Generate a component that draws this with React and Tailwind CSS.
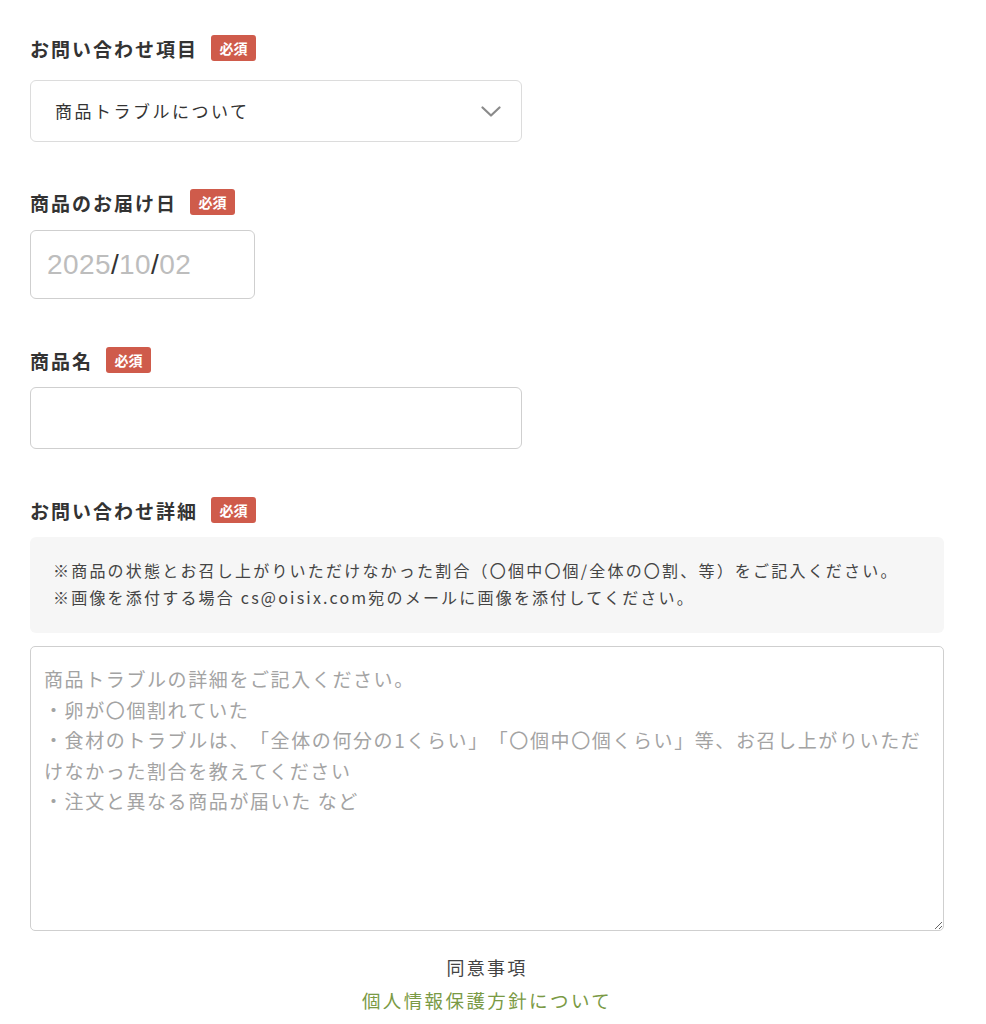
import React from "react";

const jp = { fontFamily: '"Noto Sans CJK JP", "Noto Sans", sans-serif' };

const Required = () => (
  <span className="inline-flex h-[26px] w-[45px] items-center justify-center rounded-[3px] bg-[#cf5b4b] text-[14px] font-bold leading-none text-white">
    必須
  </span>
);

const Label = ({ children, className = "" }) => (
  <div className={`flex items-center gap-[13px] ${className}`}>
    <span className="text-[19px] font-bold leading-none tracking-[2px] text-[#333]">{children}</span>
    <Required />
  </div>
);

const placeholder =
  "商品トラブルの詳細をご記入ください。\n・卵が〇個割れていた\n・食材のトラブルは、「全体の何分の1くらい」「〇個中〇個くらい」等、お召し上がりいただけなかった割合を教えてください\n・注文と異なる商品が届いた など";

export default function App() {
  return (
    <div className="min-h-screen bg-white [text-spacing-trim:space-all]" style={jp}>
      <div className="ml-[30px] w-[914px] pt-[35px]">
        {/* お問い合わせ項目 */}
        <Label>お問い合わせ項目</Label>
        <div className="mt-[19px] flex h-[62px] w-[492px] items-center justify-between rounded-[6px] border border-[#dcdcdc] pl-[24px] pr-[20px]">
          <span className="text-[17px] tracking-[2.5px] text-[#333]">商品トラブルについて</span>
          <svg width="20" height="11" viewBox="0 0 20 11" fill="none">
            <path d="M1.5 1.5 L10 9.5 L18.5 1.5" stroke="#8a8a8a" strokeWidth="2.2" strokeLinecap="round" strokeLinejoin="round" />
          </svg>
        </div>

        {/* 商品のお届け日 */}
        <Label className="mt-[47px]">商品のお届け日</Label>
        <div
          className="mt-[15px] flex h-[69px] w-[225px] items-center rounded-[6px] border border-[#cfcfcf] pl-[16px] text-[28px] tracking-[0.4px] text-[#bdbdbd]"
          style={{ fontFamily: '"Liberation Sans", Arial, sans-serif' }}
        >
          2025<span className="text-[#333]">/</span>10<span className="text-[#333]">/</span>02
        </div>

        {/* 商品名 */}
        <Label className="mt-[48px]">商品名</Label>
        <input
          type="text"
          className="mt-[14px] block h-[62px] w-[492px] rounded-[6px] border border-[#cfcfcf] px-[16px] text-[17px] outline-none"
        />

        {/* お問い合わせ詳細 */}
        <Label className="mt-[48px]">お問い合わせ詳細</Label>
        <div className="mt-[14px] w-[914px] rounded-[6px] bg-[#f6f6f6] px-[23px] pb-[22px] pt-[20px] text-[16px] leading-[27px] tracking-[2.2px] text-[#444]">
          <p>※商品の状態とお召し上がりいただけなかった割合（〇個中〇個/全体の〇割、等）をご記入ください。</p>
          <p>※画像を添付する場合 cs@oisix.com宛のメールに画像を添付してください。</p>
        </div>
        <textarea
          placeholder={placeholder}
          className="mt-[13px] block h-[285px] w-[914px] rounded-[5px] border border-[#cfcfcf] px-[13px] pt-[17px] text-[19px] leading-[30.5px] tracking-[1.6px] text-[#333] outline-none [text-spacing-trim:space-all] placeholder:text-[#a3a3a3]"
          style={jp}
        />

        {/* 同意事項 */}
        <div className="mt-[23px] flex flex-col items-center">
          <span className="text-[18px] leading-[26px] tracking-[2.2px] text-[#444]">同意事項</span>
          <a href="#" className="mt-[7px] text-[18.5px] leading-[26px] tracking-[2.4px] text-[#7a9a45]">
            個人情報保護方針について
          </a>
        </div>
      </div>
    </div>
  );
}
